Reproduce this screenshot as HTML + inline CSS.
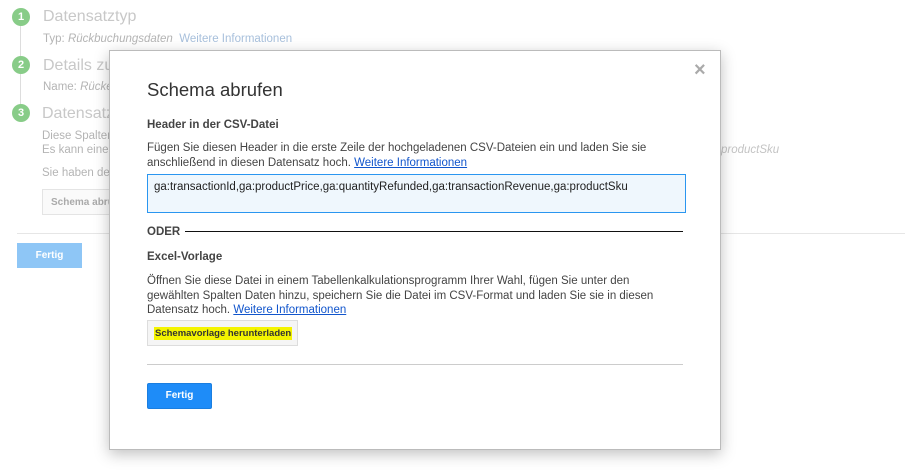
<!DOCTYPE html>
<html><head><meta charset="utf-8"><style>
*{margin:0;padding:0;box-sizing:border-box}
body{width:905px;height:473px;background:#fff;font-family:"Liberation Sans",sans-serif;position:relative;overflow:hidden;color:#333}
.a{position:absolute;white-space:nowrap}
.c{position:absolute;left:12px;width:18px;height:18px;border-radius:50%;background:#88cc88;color:#fff;font-size:11px;font-weight:bold;text-align:center;line-height:18px}
.t{font-size:16px;color:#c8c8c8}
.s{font-size:11.5px;color:#b4b4b4}
.dlg{position:absolute;left:109px;top:50px;width:612px;height:400px;background:#fff;border:1px solid #bbb;box-shadow:0 4px 14px rgba(0,0,0,.25)}
.p{font-size:11.5px;color:#444;line-height:14.5px}
a{color:#15c;text-decoration:underline}
</style></head><body>
<div style="position:absolute;left:20px;top:20px;width:1px;height:100px;background:#ddd"></div>
<div class="c" style="top:8px">1</div>
<div class="c" style="top:56px">2</div>
<div class="c" style="top:104px">3</div>
<div class="a t" style="left:43px;top:8px">Datensatztyp</div>
<div class="a s" style="left:43px;top:33px">Typ: <i>Rückbuchungsdaten</i> <span style="color:#a8c0dc">&nbsp;Weitere Informationen</span></div>
<div class="a t" style="left:43px;top:57px">Details zu</div>
<div class="a s" style="left:43px;top:81px">Name: <i>Rücke</i></div>
<div class="a t" style="left:42px;top:105px">Datensatz</div>
<div class="a s" style="left:42px;top:130px;line-height:13.5px">Diese Spalten<br>Es kann eine</div>
<div class="a s" style="left:42px;top:167px">Sie haben de</div>
<div class="a" style="left:42px;top:189px;width:80px;height:26px;border:1px solid #e4e4e4;background:#fafafa;font-size:10px;font-weight:bold;color:#aaa;padding:7px 0 0 8px">Schema abru</div>
<div class="a s" style="left:721px;top:144px;color:#c4c4c4"><i>productSku</i></div>
<div class="a" style="left:17px;top:233px;width:888px;height:1px;background:#e6e6e6"></div>
<div class="a" style="left:17px;top:243px;width:65px;height:25px;background:#8ec6f6;color:#fff;font-size:10px;font-weight:bold;text-align:center;line-height:25px">Fertig</div>

<div class="dlg">
<div class="a" style="left:584px;top:8px;font-size:20px;font-weight:bold;color:#aaa">×</div>
<div class="a" style="left:37px;top:28px;font-size:18.5px;color:#333">Schema abrufen</div>
<div class="a" style="left:37px;top:68px;font-size:11.5px;font-weight:bold;color:#444">Header in der CSV-Datei</div>
<div class="a p" style="left:37px;top:90px">Fügen Sie diesen Header in die erste Zeile der hochgeladenen CSV-Dateien ein und laden Sie sie<br>anschließend in diesen Datensatz hoch. <a>Weitere Informationen</a></div>
<div class="a" style="left:37px;top:123px;width:539px;height:39px;border:1px solid #2a96f0;background:#eff7fd;font-size:11.5px;color:#222;padding:6px 0 0 6px">ga:transactionId,ga:productPrice,ga:quantityRefunded,ga:transactionRevenue,ga:productSku</div>
<div class="a" style="left:37px;top:175px;font-size:11.5px;font-weight:bold;color:#444">ODER</div>
<div class="a" style="left:75px;top:180px;width:498px;height:1px;background:#111"></div>
<div class="a" style="left:37px;top:200px;font-size:11.5px;font-weight:bold;color:#444">Excel-Vorlage</div>
<div class="a p" style="left:37px;top:223px">Öffnen Sie diese Datei in einem Tabellenkalkulationsprogramm Ihrer Wahl, fügen Sie unter den<br>gewählten Spalten Daten hinzu, speichern Sie die Datei im CSV-Format und laden Sie sie in diesen<br>Datensatz hoch. <a>Weitere Informationen</a></div>
<div class="a" style="left:37px;top:269px;width:151px;height:26px;border:1px solid #ddd;background:#f5f5f5"><span style="position:absolute;left:6px;top:6px;background:#f4f400;font-size:9.5px;font-weight:bold;color:#333;padding:1px 1px">Schemavorlage herunterladen</span></div>
<div class="a" style="left:37px;top:313px;width:536px;height:1px;background:#ccc"></div>
<div class="a" style="left:37px;top:332px;width:65px;height:26px;background:#1e8cf8;border:1px solid #1a7ee0;border-radius:2px;color:#fff;font-size:10px;font-weight:bold;text-align:center;line-height:24px">Fertig</div>
</div>
</body></html>
